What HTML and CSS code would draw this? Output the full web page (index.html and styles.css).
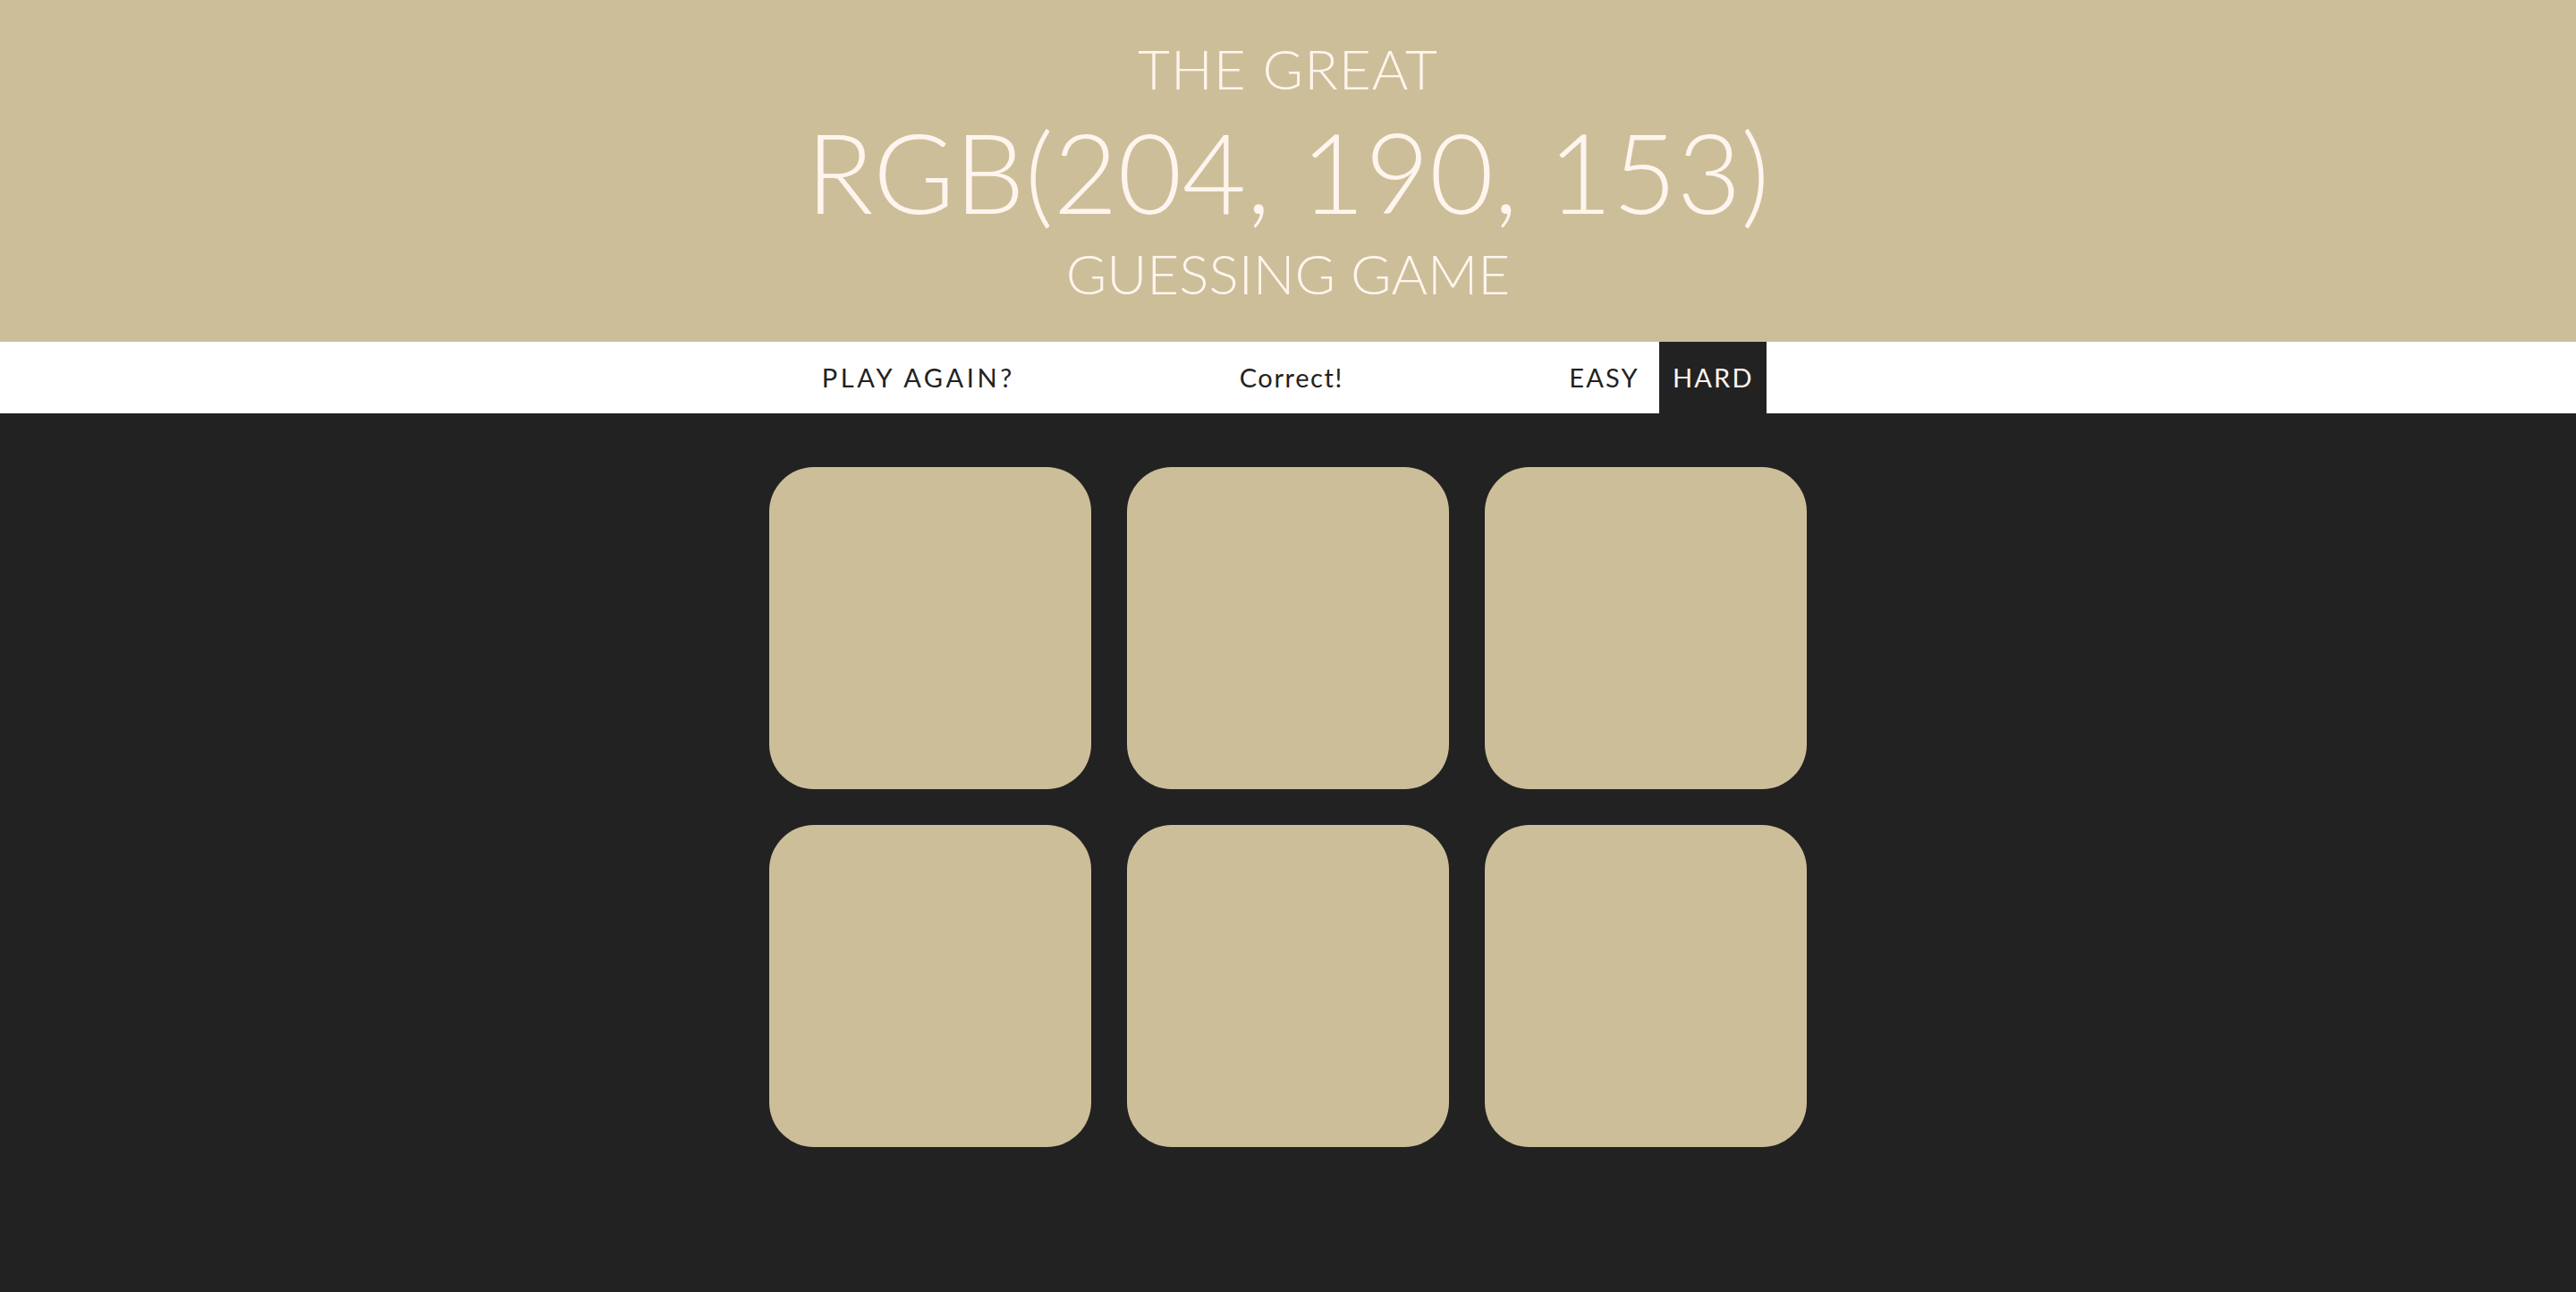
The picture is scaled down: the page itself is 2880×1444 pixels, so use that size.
FILE: index.html
```html
<!DOCTYPE html>
<html lang="en">
<head>
<meta charset="utf-8">
<title>Color Game</title>
<link rel="stylesheet" href="styles.css">
</head>
<body>
<header class="title">
  <div class="title-small">THE GREAT</div>
  <div class="title-rgb">RGB(204, 190, 153)</div>
  <div class="title-small title-last">GUESSING GAME</div>
</header>
<nav class="stripe">
  <button class="btn btn-reset">PLAY AGAIN?</button>
  <span class="message">Correct!</span>
  <div class="modes">
    <button class="btn btn-mode">EASY</button>
    <button class="btn btn-mode selected">HARD</button>
  </div>
</nav>
<main class="board">
  <div class="square"></div>
  <div class="square"></div>
  <div class="square"></div>
  <div class="square"></div>
  <div class="square"></div>
  <div class="square"></div>
</main>
</body>
</html>
```
FILE: styles.css
```css
html, body {
  margin: 0;
  padding: 0;
}
body {
  background: #222222;
  font-family: Lato, "Open Sans", sans-serif;
  min-height: 1444px;
}
.title {
  background: #ccbe99;
  color: #fff5ee;
  text-align: center;
  font-weight: 300;
  padding: 45px 0 47px;
  height: 382px;
  box-sizing: border-box;
}
.title-small {
  font-size: 62px;
  line-height: 62px;
  letter-spacing: 1px;
}
.title-last {
  letter-spacing: 0;
}
.title-rgb {
  font-size: 124px;
  line-height: 124px;
  margin: 22px 0 21px;
}
.stripe {
  background: #ffffff;
  height: 80px;
  display: flex;
  justify-content: center;
  align-items: stretch;
}
.btn {
  border: none;
  background: none;
  font-family: inherit;
  font-size: 29px;
  font-weight: 400;
  letter-spacing: 2.6px;
  color: #222222;
  line-height: 80px;
  height: 80px;
  padding: 0 15px;
  margin: 0;
  white-space: nowrap;
  cursor: pointer;
}
.btn-mode {
  padding: 0 14px 0 15px;
  letter-spacing: 2.2px;
}
.btn-reset {
  width: 243px;
  padding: 0;
  letter-spacing: 3.6px;
}
.message {
  width: 591px;
  text-align: center;
  font-size: 29px;
  line-height: 80px;
  color: #222222;
  letter-spacing: 1.6px;
  white-space: nowrap;
}
.modes {
  display: flex;
  gap: 8px;
}
.selected {
  background: #222222;
  color: #fff5ee;
}
.board {
  width: 1160px;
  margin: 60px auto 0;
  display: grid;
  grid-template-columns: repeat(3, 360px);
  gap: 40px;
}
.square {
  width: 360px;
  height: 360px;
  background: #ccbe99;
  border-radius: 50px;
}
```
